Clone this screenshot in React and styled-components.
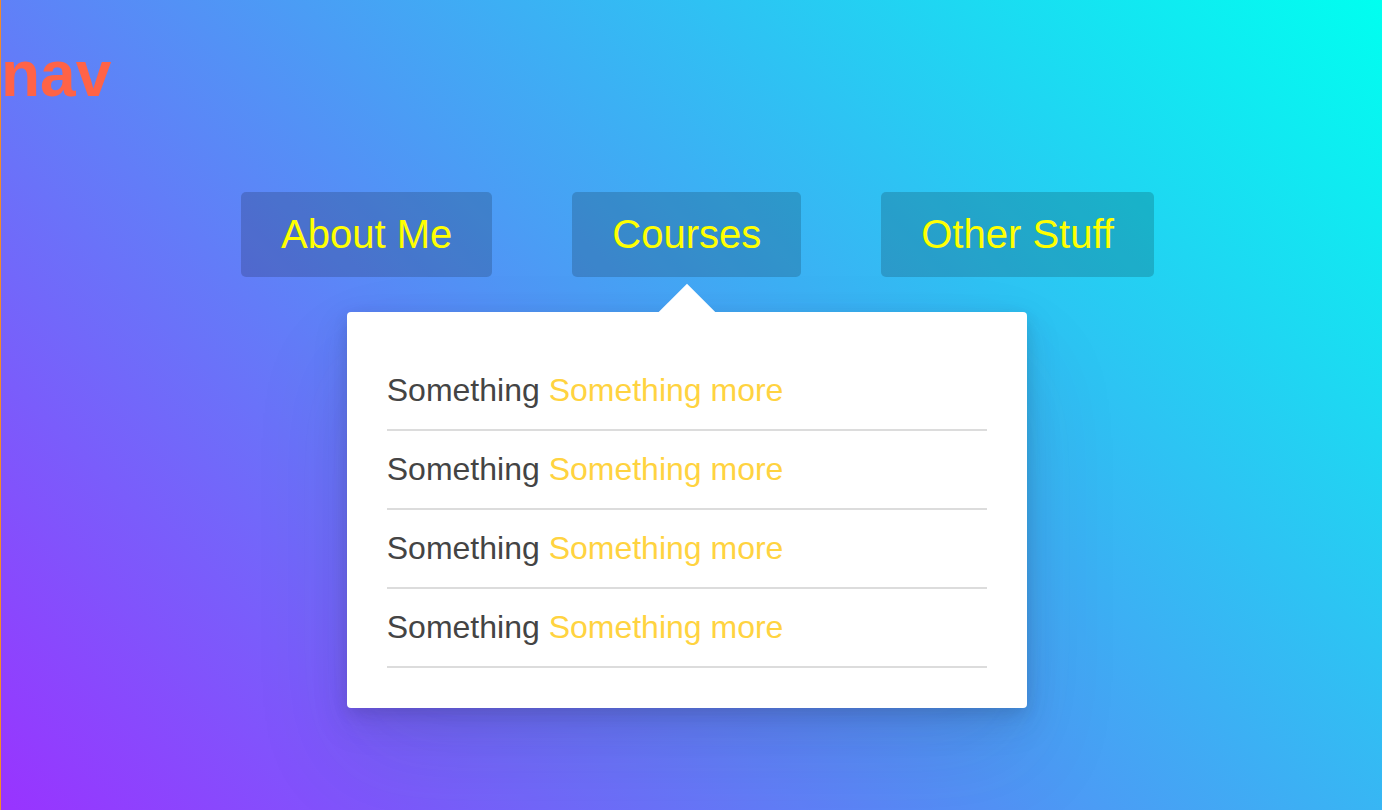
import React from "react";
import styled, { createGlobalStyle } from "styled-components";

const GlobalStyle = createGlobalStyle`
  html, body { margin: 0; padding: 0; }
  body {
    font-family: "Liberation Sans", Arial, sans-serif;
  }
  * { box-sizing: border-box; }
`;

const Page = styled.div`
  min-height: 100vh;
  border-left: 1px solid #f0892e;
  background: linear-gradient(45deg, #9933ff 0%, #4b9cf5 50%, #00fff0 100%);
  overflow: hidden;
`;

const Title = styled.h2`
  margin: 37px 0 0;
  font-size: 64px;
  font-weight: bold;
  color: #ff6347;
  line-height: normal;
`;

const Nav = styled.nav`
  margin-top: 81px;
  padding-left: 12px;
`;

const Menu = styled.ul`
  list-style: none;
  margin: 0;
  padding: 0;
  display: flex;
  justify-content: center;
  gap: 80px;
`;

const Item = styled.li`
  position: relative;
`;

const NavButton = styled.a`
  display: flex;
  align-items: center;
  height: 85px;
  padding: 0 40px;
  border-radius: 5px;
  background: rgba(0, 0, 0, 0.17);
  color: #ffff00;
  font-size: 40px;
  text-decoration: none;
  white-space: nowrap;
`;

const Dropdown = styled.div`
  position: absolute;
  top: calc(100% + 35px);
  left: 50%;
  transform: translateX(-50%);
  width: 680px;
  padding: 40px;
  background: #fff;
  border-radius: 4px;
  box-shadow: 0 50px 100px rgba(50, 50, 93, 0.1),
    0 15px 35px rgba(50, 50, 93, 0.15), 0 5px 15px rgba(0, 0, 0, 0.1);
`;

const Arrow = styled.span`
  position: absolute;
  top: 0;
  left: 50%;
  width: 40px;
  height: 40px;
  background: #fff;
  transform: translate(-50%, -50%) rotate(45deg);
`;

const List = styled.ul`
  list-style: none;
  margin: 0;
  padding: 0;
  position: relative;
`;

const Row = styled.li`
  padding: 20px 0;
  border-bottom: 2px solid #dcdcdc;
  font-size: 32px;
  line-height: normal;
  color: #444;
  white-space: nowrap;
`;

const More = styled.span`
  color: #ffd340;
`;

const rows = [1, 2, 3, 4];

export default function App() {
  return (
    <>
      <GlobalStyle />
      <Page>
        <Title>nav</Title>
        <Nav>
          <Menu>
            <Item>
              <NavButton href="#">About Me</NavButton>
            </Item>
            <Item>
              <NavButton href="#">Courses</NavButton>
              <Dropdown>
                <Arrow />
                <List>
                  {rows.map((r) => (
                    <Row key={r}>
                      Something <More>Something more</More>
                    </Row>
                  ))}
                </List>
              </Dropdown>
            </Item>
            <Item>
              <NavButton href="#">Other Stuff</NavButton>
            </Item>
          </Menu>
        </Nav>
      </Page>
    </>
  );
}
